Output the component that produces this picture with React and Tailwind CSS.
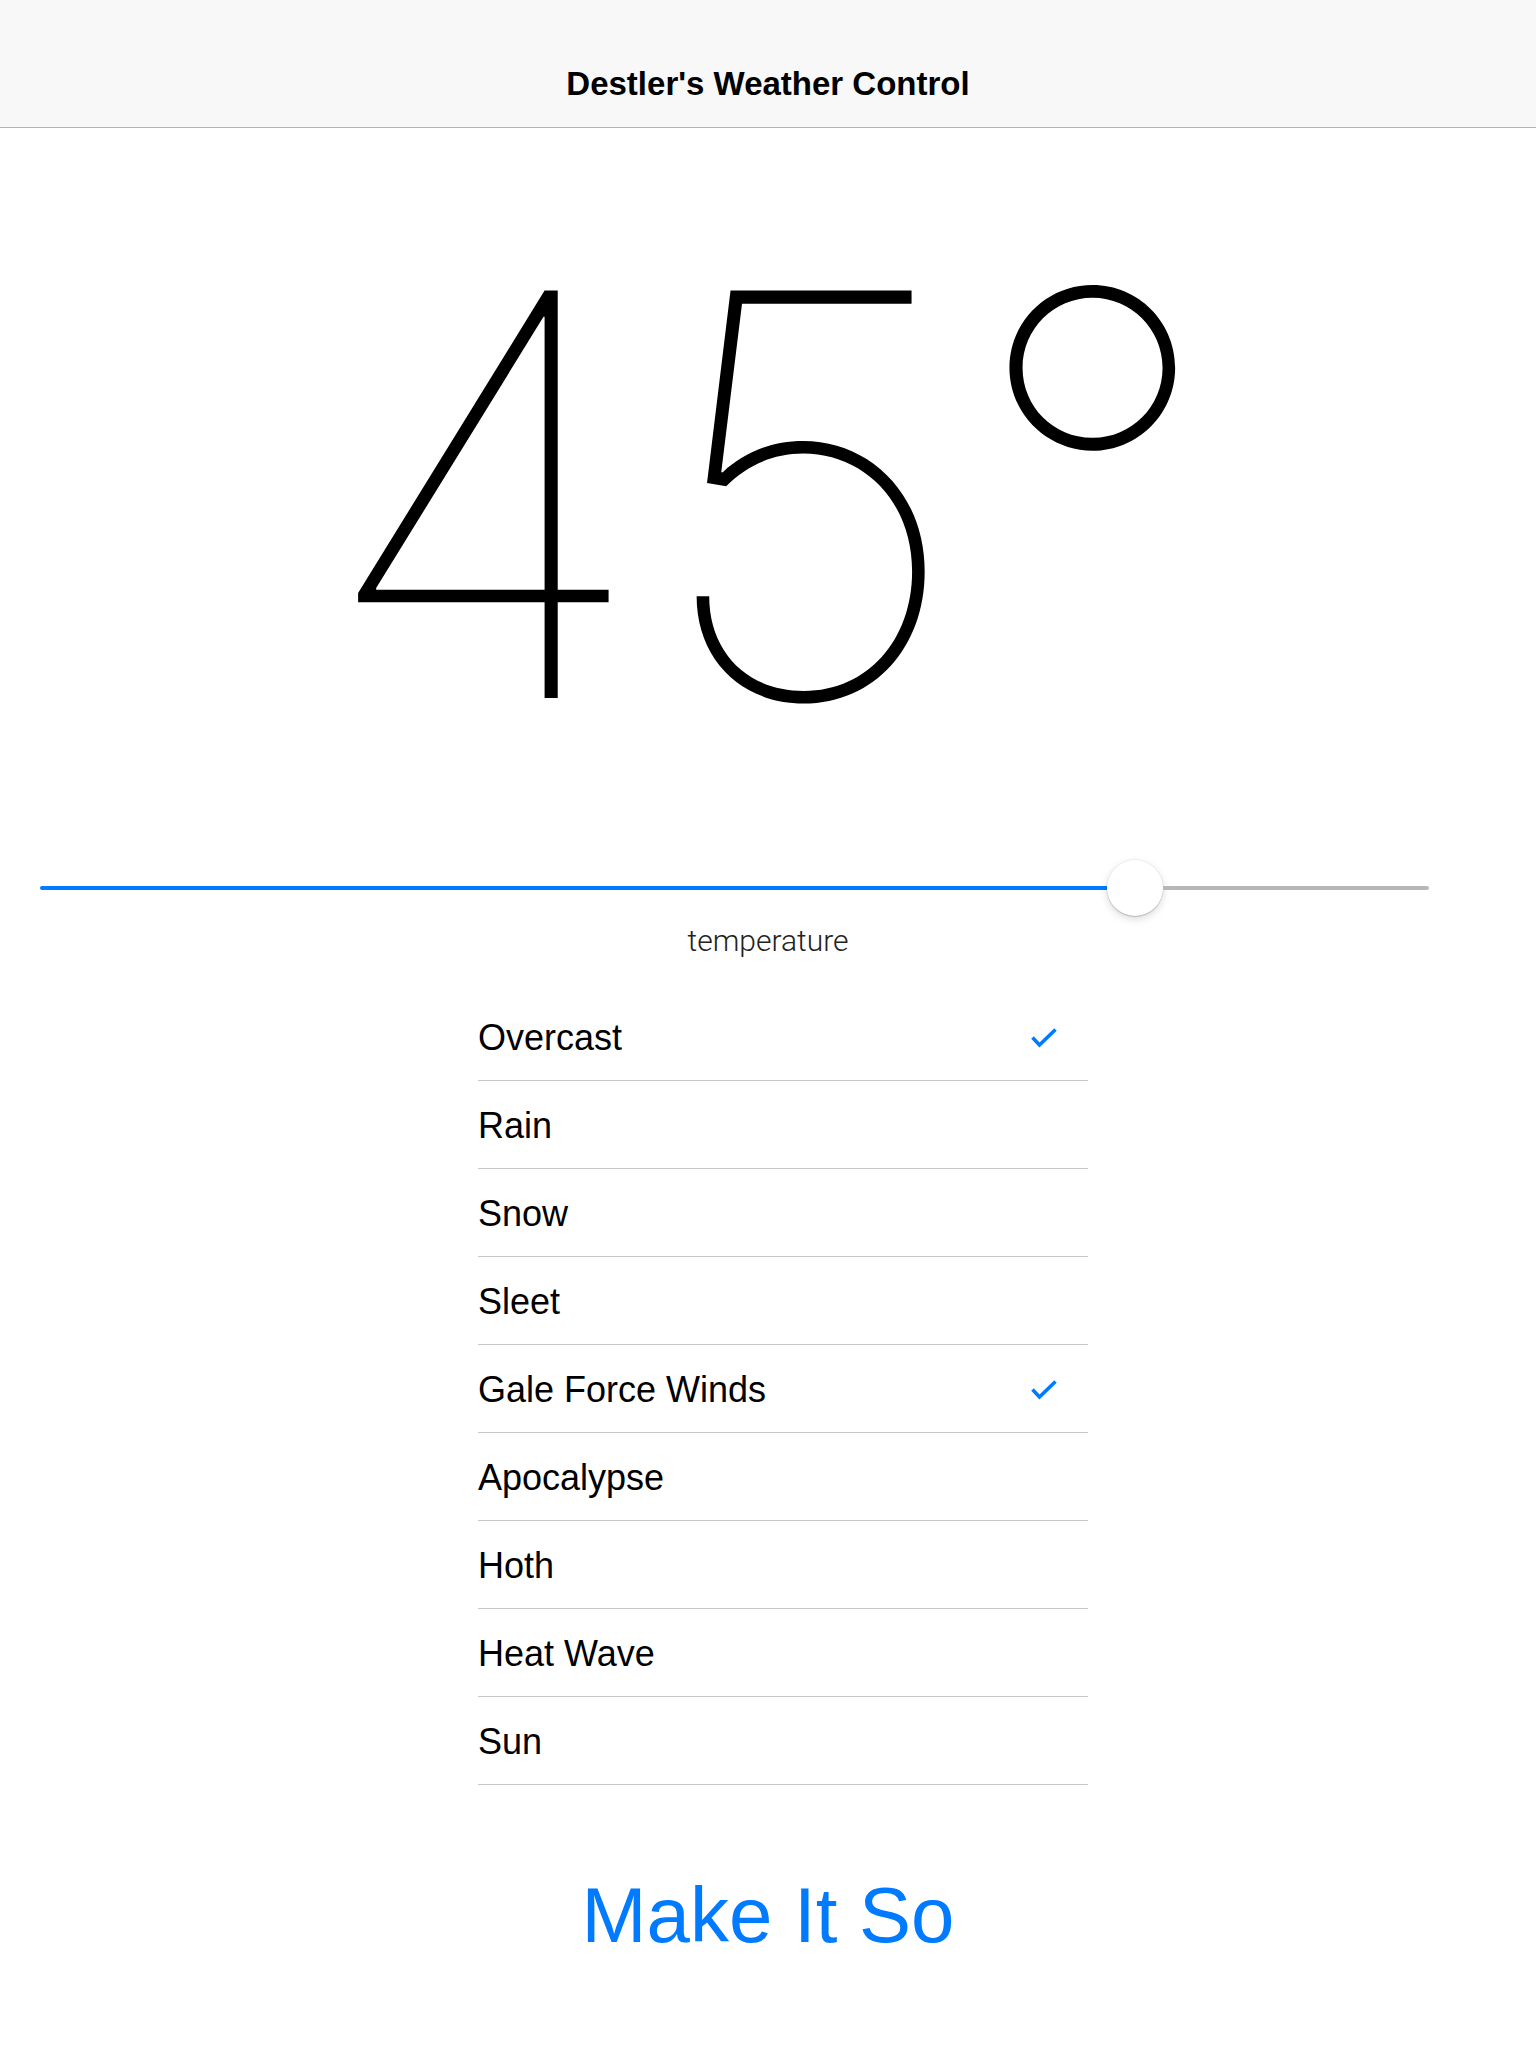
import React, { useState } from 'react';

const conditions = [
  'Overcast',
  'Rain',
  'Snow',
  'Sleet',
  'Gale Force Winds',
  'Apocalypse',
  'Hoth',
  'Heat Wave',
  'Sun',
];

function Check() {
  return (
    <svg width="26" height="20" viewBox="0 0 26 20" fill="none">
      <path d="M1.5 9.5 L8.5 17 L24.5 1.5" stroke="#007aff" strokeWidth="3.6" />
    </svg>
  );
}

export default function App() {
  const [selected, setSelected] = useState(['Overcast', 'Gale Force Winds']);

  const toggle = (name) => {
    setSelected((prev) =>
      prev.includes(name) ? prev.filter((n) => n !== name) : [...prev, name]
    );
  };

  return (
    <div className="min-h-[2048px] bg-white text-black font-['Liberation_Sans',Arial,sans-serif]">
      {/* nav bar */}
      <div className="h-[128px] pt-[40px] bg-[#f8f8f8] border-b border-[#b2b2b2] flex items-center justify-center">
        <h1 className="text-[33px] leading-none font-bold">Destler's Weather Control</h1>
      </div>

      {/* big temperature readout */}
      <div className="mt-[86px] text-center text-[560px] leading-none font-thin font-['Inter',sans-serif]">
        45°
      </div>

      {/* slider */}
      <div className="mt-[86px] ml-[40px] w-[1389px] h-[56px] flex items-center">
        <div className="w-[1067px] h-[4px] bg-[#007aff] rounded-l-full" />
        <div className="w-[56px] h-[56px] shrink-0 rounded-full bg-white shadow-[0_3px_8px_rgba(0,0,0,0.15),0_1px_1px_rgba(0,0,0,0.16),0_0_0_1px_rgba(0,0,0,0.04)]" />
        <div className="flex-1 h-[4px] bg-[#b7b7b7] rounded-r-full" />
      </div>
      <div className="mt-[10px] text-center text-[30px] leading-none font-light text-[#222] font-['Roboto',sans-serif]">
        temperature
      </div>

      {/* conditions list */}
      <ul className="mt-[37px] ml-[478px] w-[610px]">
        {conditions.map((name) => (
          <li
            key={name}
            onClick={() => toggle(name)}
            className="h-[88px] pt-[2px] pr-[31px] flex items-center justify-between border-b border-[#c8c7cc] cursor-pointer"
          >
            <span className="text-[36px] leading-none">{name}</span>
            {selected.includes(name) && <Check />}
          </li>
        ))}
      </ul>

      <div className="mt-[91px] text-center">
        <button className="text-[78px] leading-none text-[#007aff]">Make It So</button>
      </div>
    </div>
  );
}
